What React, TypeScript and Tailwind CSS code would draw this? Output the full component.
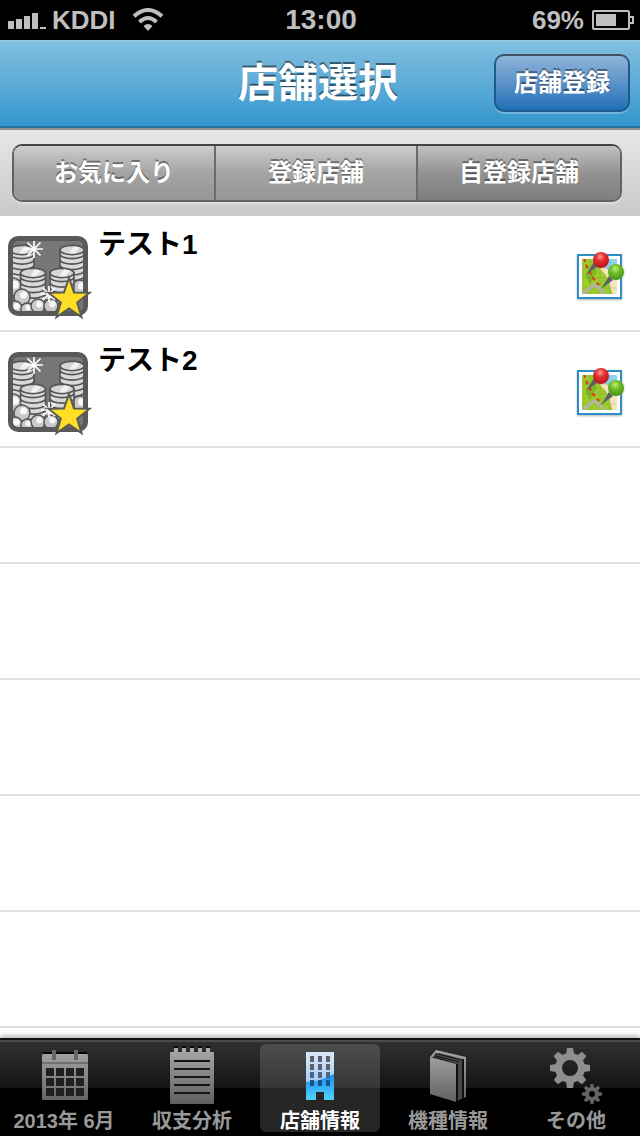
import React from "react";

const metal = (
  <linearGradient id="metal" x1="0" y1="0" x2="0" y2="60" gradientUnits="userSpaceOnUse">
    <stop offset="0" stopColor="#acacac" />
    <stop offset="1" stopColor="#5c5c5c" />
  </linearGradient>
);

function Signal() {
  return (
    <svg className="h-5 w-10" viewBox="0 0 40 20" fill="#bfbfbf" aria-hidden="true">
      <path d="M0 11h6v8h-6zM8 9h6v10h-6zM16 6h6v13h-6zM24 3h6v16h-6zM32 17h6v2h-6z" />
    </svg>
  );
}

function Wifi() {
  return (
    <svg className="h-6 w-8" viewBox="0 0 32 24" fill="none" stroke="#bfbfbf" aria-hidden="true">
      <path d="M2 8.2Q16-4.2 30 8.2" strokeWidth="4" />
      <path d="M7.5 14Q16 6 24.5 14" strokeWidth="4" />
      <path d="M11.5 18Q16 14 20.5 18L16 23z" fill="#bfbfbf" stroke="none" />
    </svg>
  );
}

function Battery() {
  return (
    <svg className="h-5 w-[42px]" viewBox="0 0 42 20" fill="none" stroke="#bfbfbf" strokeWidth="2" aria-hidden="true">
      <rect x="1" y="1" width="36" height="18" rx="1" />
      <path d="M38 7h3v6h-3" />
      <rect x="4" y="4" width="20" height="12" fill="#bfbfbf" stroke="none" />
    </svg>
  );
}

function Stack({ x, y, rx, count }: { x: number; y: number; rx: number; count: number }) {
  const layers = Array.from({ length: count }, (_, i) => count - 1 - i);
  return (
    <g stroke="#555" strokeWidth="1.6">
      {layers.map((i) => (
        <path
          key={i}
          fill="#d9d9d9"
          d={`M${x - rx} ${y + i * 5.5}v4a${rx} 4.6 0 0 0 ${rx * 2} 0v-4z`}
        />
      ))}
      <ellipse cx={x} cy={y} rx={rx} ry="4.6" fill="#d6d6d6" />
      <path d={`M${x - 3} ${y + 3.6}l5-7.4 6 1.2-5 6.2z`} fill="#f1f1f1" stroke="none" />
    </g>
  );
}

function Ball({ x, y, r }: { x: number; y: number; r: number }) {
  return (
    <g>
      <circle cx={x} cy={y} r={r} fill="#c9c9c9" stroke="#555" strokeWidth="1.4" />
      <circle cx={x + r * 0.2} cy={y - r * 0.25} r={r * 0.45} fill="#f8f8f8" />
    </g>
  );
}

function Coins() {
  return (
    <svg className="h-[84px] w-[84px] shrink-0" viewBox="0 0 84 84" aria-hidden="true">
      <defs>
        <clipPath id="coin-area">
          <rect x="5" y="5" width="70" height="70" rx="5" />
        </clipPath>
      </defs>
      <rect width="80" height="80" rx="10" fill="#595959" />
      <g clipPath="url(#coin-area)">
        <rect width="80" height="80" fill="#777" />
        <Stack x={14} y={14} rx={12} count={7} />
        <Stack x={64} y={14} rx={12} count={7} />
        <Ball x={5} y={51} r={9} />
        <Ball x={72} y={52} r={8} />
        <Stack x={54} y={37} rx={12} count={5} />
        <Ball x={42} y={64} r={7} />
        <Stack x={25} y={37} rx={12.5} count={5} />
        <Ball x={14} y={61} r={8} />
        <Ball x={7} y={72} r={7} />
        <Ball x={19} y={73} r={6} />
        <Ball x={30} y={70} r={7} />
        <Ball x={43} y={70} r={7} />
        <path d="M26 4v18M17 13h18M19.500 6.500l13 13M32.500 6.500l-13 13" stroke="#fff" strokeWidth="1.700" />
        <path d="M41 50v16M33 58h16M35 52l12 12M47 52l-12 12" stroke="#fff" strokeWidth="1.700" />
      </g>
      <path
        d="M61 42l5 14.500 15.500.3-12.300 9.700 4.300 14.500-12.500-8.500-12.500 8.500 4.300-14.500-12.300-9.700 15.500-.3z"
        fill="#ffdf26"
        stroke="#5b5b55"
        strokeWidth="2"
      />
    </svg>
  );
}

function MapPins() {
  return (
    <svg className="h-12 w-12 drop-shadow-[0_1px_1px_rgba(0,0,0,0.3)]" viewBox="0 0 48 48" aria-hidden="true">
      <defs>
        <clipPath id="map-area">
          <path d="M6 7h35v35h-35z" />
        </clipPath>
        <radialGradient id="pin-red" cx=".45" cy=".3" r=".7">
          <stop offset="0" stopColor="#ff9a94" />
          <stop offset=".4" stopColor="#e23030" />
          <stop offset="1" stopColor="#b8151a" />
        </radialGradient>
        <radialGradient id="pin-green" cx=".45" cy=".3" r=".7">
          <stop offset="0" stopColor="#c4ee80" />
          <stop offset=".4" stopColor="#72bd28" />
          <stop offset="1" stopColor="#459414" />
        </radialGradient>
      </defs>
      <rect x="2" y="3" width="43" height="43" fill="#fff" stroke="#2e8fc4" strokeWidth="2" />
      <g clipPath="url(#map-area)">
        <path d="M5 6h37v37h-37z" fill="#f6e5bd" />
        <path d="M24 6h18v24q-4-10-14-15z" fill="#8fcff2" />
        <path d="M5 6h14q3 10 10 16 5 7 5 13l3 8h-32z" fill="#9bcb2e" />
        <path d="M9 23l8-11 4 8-7 12z" fill="#7fb822" />
        <path d="M5 16h37M5 26h37M5 36h37M14 6v37M24 6v37M34 6v37" stroke="#7d7d55" strokeOpacity=".25" />
        <path d="M8 6l3 9 6 11 6 7" fill="none" stroke="#e0371c" strokeWidth="2" strokeDasharray="4 3" />
        <path d="M5 43l13-10 5 3 6 7" fill="none" stroke="#b4b3a5" strokeWidth="3" />
      </g>
      <path d="M10 23l8-13 4 4z" fill="#5c6166" />
      <path d="M25 37l8-13 4 4z" fill="#5c6166" />
      <circle cx="25" cy="8" r="8" fill="url(#pin-red)" />
      <circle cx="40" cy="20" r="8" fill="url(#pin-green)" />
    </svg>
  );
}

function TabSvg({ children }: { children: React.ReactNode }) {
  return (
    <svg className="h-[60px] w-16 shrink-0" viewBox="0 0 64 60" aria-hidden="true">
      <defs>{metal}</defs>
      {children}
    </svg>
  );
}

function CalendarIcon() {
  const cells = [];
  for (let r = 0; r < 3; r++)
    for (let c = 0; c < 4; c++)
      cells.push(<rect key={`${r}-${c}`} x={14 + c * 10} y={22 + r * 10} width="8" height="8" fill="#202020" />);
  return (
    <TabSvg>
      <path d="M11 7h44" stroke="#050505" strokeWidth="2" />
      <rect x="10" y="8" width="46" height="46" rx="1.500" fill="url(#metal)" />
      <path d="M10 17h46" stroke="#707070" strokeWidth="2" />
      <path d="M20 4h4v10h-4zM42 4h4v10h-4z" fill="#666" />
      {cells}
    </TabSvg>
  );
}

function NotepadIcon() {
  return (
    <TabSvg>
      <path d="M14 1h4M22 1h4M30 1h4M38 1h4M46 1h4" stroke="#080808" strokeWidth="2" />
      <path
        d="M10 7q0-1 1-1h3v-4h4v4h4v-4h4v4h4v-4h4v4h4v-4h4v4h4v-4h4v4h3q1 0 1 1v50q0 1-1 1h-42q-1 0-1-1z"
        fill="url(#metal)"
      />
      <path d="M14 15h36M14 23h36M14 31h36M14 39h36M14 47h36" stroke="#151515" strokeWidth="2" />
    </TabSvg>
  );
}

function BuildingIcon() {
  const windows = [];
  for (let r = 0; r < 4; r++)
    for (let c = 0; c < 3; c++)
      windows.push(
        <rect
          key={`${r}-${c}`}
          x={22 + c * 8}
          y={10 + r * 8}
          width="4"
          height="6"
          fill={r === 3 ? "#17558c" : r === 2 ? "#4a648a" : "#59616f"}
        />
      );
  return (
    <TabSvg>
      <defs>
        <linearGradient id="sky" x1="0" y1="0" x2="0" y2="1">
          <stop offset="0" stopColor="#dbe9fb" />
          <stop offset="1" stopColor="#86b8f2" />
        </linearGradient>
        <linearGradient id="water" x1="0" y1="0" x2="0" y2="1">
          <stop offset="0" stopColor="#1a8bef" />
          <stop offset="1" stopColor="#51d2fd" />
        </linearGradient>
      </defs>
      <path d="M18 6h28v48h-10v-8h-8v8h-10z" fill="url(#sky)" />
      <path d="M18 36q16-1 28-8v26h-10v-8h-8v8h-10z" fill="url(#water)" />
      {windows}
    </TabSvg>
  );
}

function BookIcon() {
  return (
    <TabSvg>
      <path d="M14 11l6-7 30 7v40l-2 1v-38l-28-7-3 4z" fill="url(#metal)" />
      <path d="M19 10l4-3 24 6v39l-6 3v-37z" fill="#484848" />
      <path d="M22 8l23 6M20 10l23 6" stroke="#161616" strokeWidth="1" />
      <path d="M47 13v39M41 18v37" stroke="#101010" strokeWidth="2" />
      <path d="M14 11l26 7v38l-26-8z" fill="url(#metal)" />
    </TabSvg>
  );
}

function Gear({ x, y, outer, body, hole, tooth, fill }: { x: number; y: number; outer: number; body: number; hole: number; tooth: number; fill: string }) {
  const ring = (body + hole) / 2;
  return (
    <g transform={`translate(${x} ${y})`}>
      <circle r={ring} fill="none" stroke={fill} strokeWidth={body - hole} />
      {[0, 45, 90, 135, 180, 225, 270, 315].map((a) => (
        <path
          key={a}
          transform={`rotate(${a})`}
          d={`M${-tooth} ${-body + 1}L${-tooth * 0.75} ${-outer}H${tooth * 0.75}L${tooth} ${-body + 1}z`}
          fill={fill}
        />
      ))}
    </g>
  );
}

function GearsIcon() {
  return (
    <TabSvg>
      <Gear x={26} y={22} outer={20} body={15} hole={8} tooth={4} fill="#8e8e8e" />
      <Gear x={48} y={48} outer={10} body={7} hole={3} tooth={2} fill="#656565" />
    </TabSvg>
  );
}

const stores = ["テスト1", "テスト2"];
const segments = ["お気に入り", "登録店舗", "自登録店舗"];
const tabs = [
  { label: "2013年 6月", icon: <CalendarIcon /> },
  { label: "収支分析", icon: <NotepadIcon /> },
  { label: "店舗情報", icon: <BuildingIcon /> },
  { label: "機種情報", icon: <BookIcon /> },
  { label: "その他", icon: <GearsIcon /> },
];

export default function App() {
  const [segment, setSegment] = React.useState(2);
  const [tab, setTab] = React.useState(2);
  return (
    <div className="flex h-screen flex-col bg-white font-['Liberation_Sans','Noto_Sans_CJK_JP',sans-serif] font-bold">
      <div className="grid h-10 shrink-0 grid-cols-[1fr_auto_1fr] items-center bg-black pr-1.5 pl-2 text-[26px] leading-10 text-[#bfbfbf]">
        <div className="flex items-center gap-1">
          <Signal />
          <span>KDDI</span>
          <span className="pl-3">
            <Wifi />
          </span>
        </div>
        <span className="text-[28px]">13:00</span>
        <div className="flex items-center justify-end gap-2">
          <span>69%</span>
          <Battery />
        </div>
      </div>

      <header className="grid h-[88px] shrink-0 grid-cols-[1fr_auto_1fr] items-center border-t-2 border-b-2 border-t-[#90c8e3] border-b-[#267297] bg-linear-to-b from-[#81bfdf] to-[#3096ce] pr-2.5 pb-0.5 pl-1.5">
        <span />
        <h1 className="text-[40px] leading-[56px] text-white [text-shadow:0_-2px_0_rgba(0,0,0,0.5)]">店舗選択</h1>
        <button
          type="button"
          className="h-[58px] justify-self-end rounded-[10px] border-2 border-[#1e5a8c] border-t-[#454f63] bg-linear-to-b from-[#8fb4d9] to-[#1b70b7] px-[18px] text-2xl leading-8 text-white shadow-[0_2px_0_rgba(255,255,255,0.25)] [text-shadow:0_-2px_0_rgba(0,0,0,0.4)]"
        >
          店舗登録
        </button>
      </header>

      <div className="h-[88px] shrink-0 border-t-2 border-[#929292] bg-linear-to-b from-[#e7e7e7] to-[#c9c9c9] pt-3.5 pr-[18px] pl-3">
        <div className="grid h-[58px] grid-cols-3 overflow-hidden rounded-[10px] border-2 border-[#626262] border-t-[#444] shadow-[0_2px_0_rgba(255,255,255,0.3)]">
          {segments.map((s, i) => (
            <button
              key={s}
              type="button"
              aria-pressed={i === segment}
              onClick={() => setSegment(i)}
              className={`text-2xl leading-8 text-white [text-shadow:0_-2px_0_rgba(0,0,0,0.4)] ${
                i < 2 ? "border-r-2 border-[#6b6b6b]" : ""
              } ${i === segment ? "bg-linear-to-b from-[#c2c2c2] via-[#929292] to-[#7e7e7e]" : "bg-linear-to-b from-[#cdcdcd] via-[#a4a4a4] to-[#969696]"}`}
            >
              {s}
            </button>
          ))}
        </div>
      </div>

      <ul className="min-h-0 flex-1 overflow-hidden">
        {stores.map((s) => (
          <li key={s} className="flex h-[116px] border-b-2 border-[#dfdfdf] pr-4 pl-2">
            <div className="flex pt-5">
              <Coins />
            </div>
            <span className="flex-1 pt-2 pl-1.5 text-[28px] leading-[42px] text-black">{s}</span>
            <button type="button" aria-label={`${s}の地図`} className="self-center pt-1.5">
              <MapPins />
            </button>
          </li>
        ))}
        {[0, 1, 2, 3, 4, 5].map((i) => (
          <li key={i} className="h-[116px] border-b-2 border-[#dfdfdf]" />
        ))}
      </ul>

      <nav className="z-10 grid h-[98px] shrink-0 grid-cols-5 border-t-2 border-[#111] bg-[linear-gradient(#4a4a4a_2px,#303030_2px,#141414_48px,#000_48px)] pt-1 shadow-[0_-2px_5px_rgba(0,0,0,0.3)]">
        {tabs.map((t, i) => (
          <button
            key={t.label}
            type="button"
            aria-current={i === tab ? "page" : undefined}
            onClick={() => setTab(i)}
            className={`mx-1 flex h-[88px] flex-col items-center rounded-md pt-0.5 text-xl leading-[30px] whitespace-nowrap ${
              i === tab ? "bg-white/15 text-white" : "text-[#999]"
            }`}
          >
            {t.icon}
            <span>{t.label}</span>
          </button>
        ))}
      </nav>
    </div>
  );
}
